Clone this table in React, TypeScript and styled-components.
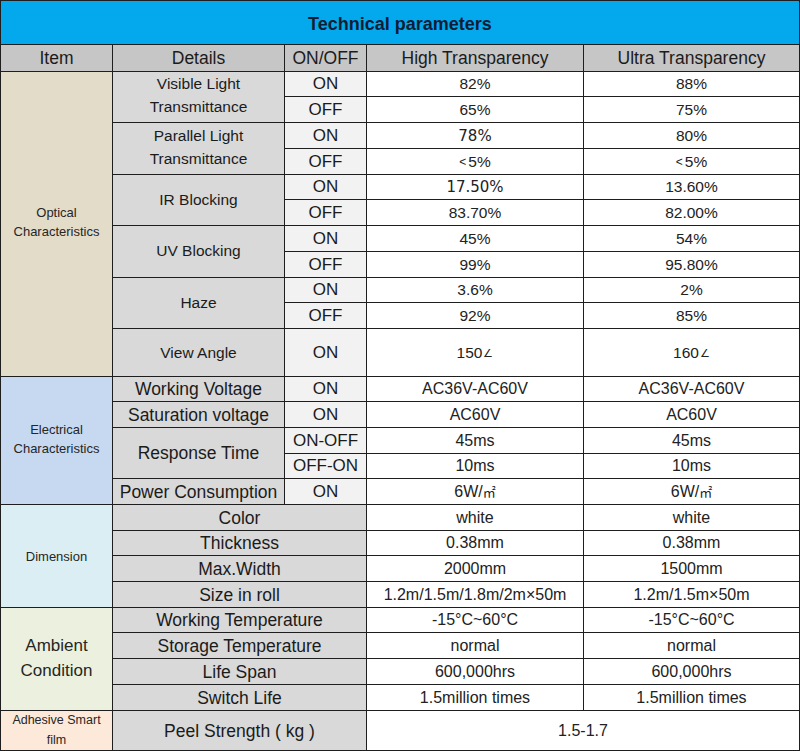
import React from "react";
import styled, { createGlobalStyle, css } from "styled-components";

const Global = createGlobalStyle`
  html, body { margin: 0; padding: 0; background: #ffffff; }
  body { font-family: "Liberation Sans", Arial, sans-serif; }
`;

type Place = { $c: number; $r: number; $cs?: number; $rs?: number };

const ROWS = [
  43, 26,
  24, 25, 25, 25, 24, 25, 25, 25, 24, 25, 47,
  24, 25, 25, 24, 25,
  25, 24, 25, 25,
  24, 25, 25, 25,
  39,
];

const Table = styled.div`
  display: grid;
  grid-template-columns: 111px 171px 81px 216px 215px;
  grid-template-rows: ${ROWS.map((h) => `${h}px`).join(" ")};
  gap: 1px;
  width: 800px;
  box-sizing: border-box;
  background: #1e1e1e;
  border: 1px solid #1e1e1e;
`;

const placed = css<Place>`
  grid-column: ${(p) => p.$c} / span ${(p) => p.$cs ?? 1};
  grid-row: ${(p) => p.$r} / span ${(p) => p.$rs ?? 1};
  display: flex;
  align-items: center;
  justify-content: center;
  text-align: center;
  box-sizing: border-box;
  font-family: "Liberation Sans", Arial, sans-serif;
  color: #1b1b1b;
  white-space: nowrap;
`;

const TitleCell = styled.div<Place>`
  ${placed};
  background: #03a9ec;
  color: #0e1d36;
  font-weight: 700;
  font-size: 18px;
  padding-top: 4px;
`;

const HeaderCell = styled.div<Place>`
  ${placed};
  background: #c6c6c6;
  font-size: 17.5px;
  padding-top: 1px;
`;

const CategoryCell = styled.div<Place & { $bg: string; $size: number; $lh: number; $lift?: number }>`
  ${placed};
  background: ${(p) => p.$bg};
  font-size: ${(p) => p.$size}px;
  line-height: ${(p) => p.$lh}px;
  padding-bottom: ${(p) => p.$lift ?? 0}px;
  color: #262626;
`;

const DetailCell = styled.div<Place & { $size?: number; $lh?: number; $lift?: number }>`
  ${placed};
  background: #d9d9d9;
  font-size: ${(p) => p.$size ?? 17.5}px;
  line-height: ${(p) => p.$lh ?? 20}px;
  padding-bottom: ${(p) => p.$lift ?? 0}px;
`;

const StateCell = styled.div<Place>`
  ${placed};
  background: #f2f2f2;
  font-size: 17px;
`;

const ValueCell = styled.div<Place & { $size?: number; $alt?: boolean }>`
  ${placed};
  background: #ffffff;
  font-size: ${(p) => p.$size ?? 16}px;
  color: #222222;
  ${(p) =>
    p.$alt &&
    css`
      font-family: "DejaVu Sans", Verdana, sans-serif;
      font-size: 15px;
    `}
`;

const Angle = styled.span`
  font-size: 11px;
  margin-left: 1px;
  position: relative;
  top: 1px;
`;

const Less = styled.span`
  font-size: 12px;
  margin-right: 2px;
`;

const Unit = styled.span`
  font-family: "Noto Sans CJK SC", sans-serif;
  font-size: 13px;
`;

type Opt = { detail: [string, string?]; on: [React.ReactNode, React.ReactNode]; off: [React.ReactNode, React.ReactNode]; alt?: boolean };

const lessFive = (
  <>
    <Less>&lt;</Less>5%
  </>
);

const optical: Opt[] = [
  { detail: ["Visible Light", "Transmittance"], on: ["82%", "88%"], off: ["65%", "75%"] },
  { detail: ["Parallel Light", "Transmittance"], on: ["78%", "80%"], off: [lessFive, lessFive], alt: true },
  { detail: ["IR Blocking"], on: ["17.50%", "13.60%"], off: ["83.70%", "82.00%"], alt: true },
  { detail: ["UV Blocking"], on: ["45%", "54%"], off: ["99%", "95.80%"] },
  { detail: ["Haze"], on: ["3.6%", "2%"], off: ["92%", "85%"] },
];

type Simple = { label: string; state?: string; a: React.ReactNode; b: React.ReactNode };

const electrical: Simple[] = [
  { label: "Working Voltage", state: "ON", a: "AC36V-AC60V", b: "AC36V-AC60V" },
  { label: "Saturation voltage", state: "ON", a: "AC60V", b: "AC60V" },
];

const dimension: Simple[] = [
  { label: "Color", a: "white", b: "white" },
  { label: "Thickness", a: "0.38mm", b: "0.38mm" },
  { label: "Max.Width", a: "2000mm", b: "1500mm" },
  { label: "Size in roll", a: "1.2m/1.5m/1.8m/2m×50m", b: "1.2m/1.5m×50m" },
];

const ambient: Simple[] = [
  { label: "Working Temperature", a: "-15°C~60°C", b: "-15°C~60°C" },
  { label: "Storage Temperature", a: "normal", b: "normal" },
  { label: "Life Span", a: "600,000hrs", b: "600,000hrs" },
  { label: "Switch Life", a: "1.5million times", b: "1.5million times" },
];

const FullRows = ({ rows, start }: { rows: Simple[]; start: number }) => (
  <>
    {rows.map((r, i) => (
      <React.Fragment key={r.label}>
        <DetailCell $c={2} $cs={2} $r={start + i}>{r.label}</DetailCell>
        <ValueCell $c={4} $r={start + i}>{r.a}</ValueCell>
        <ValueCell $c={5} $r={start + i}>{r.b}</ValueCell>
      </React.Fragment>
    ))}
  </>
);

export default function App() {
  return (
    <>
      <Global />
      <Table>
        <TitleCell $c={1} $cs={5} $r={1}>Technical parameters</TitleCell>

        <HeaderCell $c={1} $r={2}>Item</HeaderCell>
        <HeaderCell $c={2} $r={2}>Details</HeaderCell>
        <HeaderCell $c={3} $r={2}>ON/OFF</HeaderCell>
        <HeaderCell $c={4} $r={2}>High Transparency</HeaderCell>
        <HeaderCell $c={5} $r={2}>Ultra Transparency</HeaderCell>

        <CategoryCell $c={1} $r={3} $rs={11} $bg="#e3dcc8" $size={13} $lh={19} $lift={5}>
          Optical
          <br />
          Characteristics
        </CategoryCell>

        {optical.map((o, i) => {
          const r = 3 + i * 2;
          const two = Boolean(o.detail[1]);
          return (
            <React.Fragment key={o.detail[0]}>
              <DetailCell $c={2} $r={r} $rs={2} $size={15.5} $lh={23} $lift={two ? 4 : 2}>
                {o.detail[0]}
                {two && <br />}
                {o.detail[1]}
              </DetailCell>
              <StateCell $c={3} $r={r}>ON</StateCell>
              <StateCell $c={3} $r={r + 1}>OFF</StateCell>
              <ValueCell $c={4} $r={r} $size={15.5} $alt={o.alt}>{o.on[0]}</ValueCell>
              <ValueCell $c={5} $r={r} $size={15.5}>{o.on[1]}</ValueCell>
              <ValueCell $c={4} $r={r + 1} $size={15.5}>{o.off[0]}</ValueCell>
              <ValueCell $c={5} $r={r + 1} $size={15.5}>{o.off[1]}</ValueCell>
            </React.Fragment>
          );
        })}

        <DetailCell $c={2} $r={13} $size={15.5}>View Angle</DetailCell>
        <StateCell $c={3} $r={13}>ON</StateCell>
        <ValueCell $c={4} $r={13} $size={15.5}>150<Angle>∠</Angle></ValueCell>
        <ValueCell $c={5} $r={13} $size={15.5}>160<Angle>∠</Angle></ValueCell>

        <CategoryCell $c={1} $r={14} $rs={5} $bg="#c6d9f1" $size={13} $lh={19} $lift={4}>
          Electrical
          <br />
          Characteristics
        </CategoryCell>
        {electrical.map((r, i) => (
          <React.Fragment key={r.label}>
            <DetailCell $c={2} $r={14 + i}>{r.label}</DetailCell>
            <StateCell $c={3} $r={14 + i}>{r.state}</StateCell>
            <ValueCell $c={4} $r={14 + i}>{r.a}</ValueCell>
            <ValueCell $c={5} $r={14 + i}>{r.b}</ValueCell>
          </React.Fragment>
        ))}
        <DetailCell $c={2} $r={16} $rs={2}>Response Time</DetailCell>
        <StateCell $c={3} $r={16}>ON-OFF</StateCell>
        <StateCell $c={3} $r={17}>OFF-ON</StateCell>
        <ValueCell $c={4} $r={16}>45ms</ValueCell>
        <ValueCell $c={5} $r={16}>45ms</ValueCell>
        <ValueCell $c={4} $r={17}>10ms</ValueCell>
        <ValueCell $c={5} $r={17}>10ms</ValueCell>
        <DetailCell $c={2} $r={18}>Power Consumption</DetailCell>
        <StateCell $c={3} $r={18}>ON</StateCell>
        <ValueCell $c={4} $r={18}>6W/<Unit>㎡</Unit></ValueCell>
        <ValueCell $c={5} $r={18}>6W/<Unit>㎡</Unit></ValueCell>

        <CategoryCell $c={1} $r={19} $rs={4} $bg="#dbeef4" $size={13} $lh={19}>
          Dimension
        </CategoryCell>
        <FullRows rows={dimension} start={19} />

        <CategoryCell $c={1} $r={23} $rs={4} $bg="#ebf1de" $size={17} $lh={25} $lift={2}>
          Ambient
          <br />
          Condition
        </CategoryCell>
        <FullRows rows={ambient} start={23} />

        <CategoryCell $c={1} $r={27} $bg="#fde9d9" $size={12.5} $lh={20} $lift={1}>
          Adhesive Smart
          <br />
          film
        </CategoryCell>
        <DetailCell $c={2} $cs={2} $r={27}>
          Peel Strength ( kg )
        </DetailCell>
        <ValueCell $c={4} $cs={2} $r={27}>1.5-1.7</ValueCell>
      </Table>
    </>
  );
}
